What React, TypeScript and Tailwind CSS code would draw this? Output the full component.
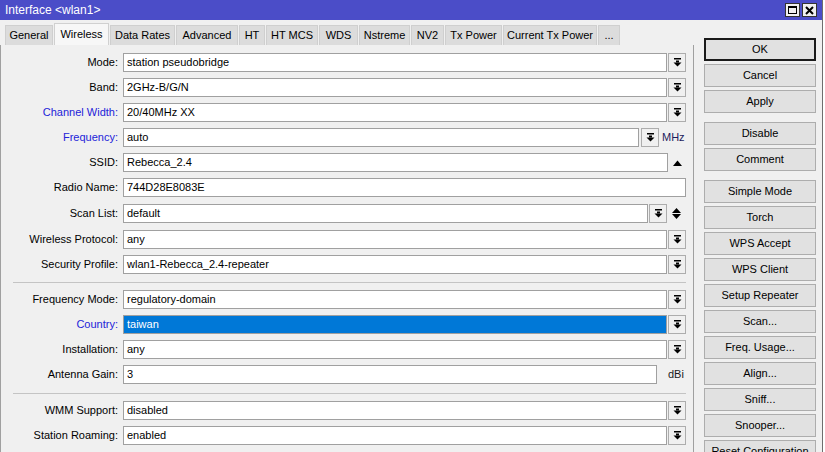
import React from 'react';

const tabs = [
  { label: 'General', w: 'w-[48px]' },
  { label: 'Wireless', w: 'w-[55px]', active: true },
  { label: 'Data Rates', w: 'w-[65px]' },
  { label: 'Advanced', w: 'w-[62px]' },
  { label: 'HT', w: 'w-[26px]' },
  { label: 'HT MCS', w: 'w-[52px]' },
  { label: 'WDS', w: 'w-[39px]' },
  { label: 'Nstreme', w: 'w-[51px]' },
  { label: 'NV2', w: 'w-[33px]' },
  { label: 'Tx Power', w: 'w-[57px]' },
  { label: 'Current Tx Power', w: 'w-[94px]' },
  { label: '...', w: 'w-[22px]' },
];

const DropIcon = () => (
  <svg width="9" height="9" viewBox="0 0 9 9">
    <rect x="1" y="0" width="7" height="1.5" fill="#000" />
    <rect x="3" y="2.5" width="3" height="2" fill="#000" />
    <polygon points="0.5,4.5 8.5,4.5 4.5,8.5" fill="#000" />
  </svg>
);

const DropBtn = () => (
  <div className="w-[18px] h-[19px] shrink-0 border border-[#adadad] bg-[#f0f0f0] flex items-center justify-center">
    <DropIcon />
  </div>
);

const Input: React.FC<{ value: string; selected?: boolean }> = ({ value, selected }) => (
  <div
    className={
      selected
        ? 'flex-1 h-[19px] border border-[#a0a0a0] bg-[#0078d7] text-white pl-[3px] leading-[17px] whitespace-nowrap overflow-hidden'
        : 'flex-1 h-[19px] border border-[#a0a0a0] bg-white pl-[3px] leading-[17px] whitespace-nowrap overflow-hidden'
    }
  >
    {value}
  </div>
);

type Kind = 'drop' | 'plain' | 'up' | 'freq' | 'scan' | 'dbi';

const Row: React.FC<{ label: string; value: string; kind: Kind; blue?: boolean; selected?: boolean; mb?: string }> = ({
  label,
  value,
  kind,
  blue,
  selected,
  mb = 'mb-[6px]',
}) => (
  <div className={'flex items-center h-[19px] shrink-0 ' + mb}>
    <div className={'w-[117px] text-right whitespace-nowrap ' + (blue ? 'text-[#2323d9]' : 'text-black')}>{label}:</div>
    <div className="ml-[5px] w-[563px] flex items-center">
      <Input value={value} selected={selected} />
      {kind === 'drop' && (
        <div className="ml-[1px]">
          <DropBtn />
        </div>
      )}
      {kind === 'up' && (
        <div className="w-[18px] shrink-0 flex justify-center">
          <svg width="9" height="6" viewBox="0 0 9 6">
            <polygon points="0,6 9,6 4.5,0.5" fill="#000" />
          </svg>
        </div>
      )}
      {kind === 'freq' && (
        <>
          <div className="ml-[2px]">
            <DropBtn />
          </div>
          <div className="w-[27px] shrink-0 pl-[3px] text-[#1c1c5c]">MHz</div>
        </>
      )}
      {kind === 'scan' && (
        <>
          <div className="ml-[1px]">
            <DropBtn />
          </div>
          <div className="w-[19px] shrink-0 flex flex-col items-center gap-[1px]">
            <svg width="9" height="5" viewBox="0 0 9 5">
              <polygon points="0,5 9,5 4.5,0" fill="#000" />
            </svg>
            <svg width="9" height="5" viewBox="0 0 9 5">
              <polygon points="0,0 9,0 4.5,5" fill="#000" />
            </svg>
          </div>
        </>
      )}
      {kind === 'dbi' && <div className="w-[29px] shrink-0 pl-[11px] text-[#1a1a1a]">dBi</div>}
    </div>
  </div>
);

const Sep = () => <div className="ml-[12px] w-[673px] h-px shrink-0 bg-[#c4c4c4] mt-[2px] mb-[7px]" />;

const Btn: React.FC<{ label: string; primary?: boolean; extra?: string }> = ({ label, primary, extra = '' }) => (
  <div
    className={
      'w-[112px] h-[23px] shrink-0 flex items-center justify-center bg-[#e1e1e1] whitespace-nowrap overflow-hidden ' +
      (primary ? 'border-2 border-[#1a1a1a] ' : 'border border-[#adadad] ') +
      extra
    }
  >
    {label}
  </div>
);

export default function App() {
  return (
    <div
      className="w-[825px] h-[452px] overflow-hidden bg-white text-[11px] text-black"
      style={{ fontFamily: '"Liberation Sans", Arial, sans-serif' }}
    >
      <div className="w-[823px] h-[452px] bg-[#f0f0f0] border-r border-[#6e6e6e] flex flex-col">
        {/* title bar */}
        <div className="h-[20px] shrink-0 bg-[#4b4dc8] flex items-center pl-[5px] text-white text-[12px]">
          <span>Interface &lt;wlan1&gt;</span>
          <div className="ml-auto mr-[5px] flex gap-[2px]">
            <div className="w-[15px] h-[14px] bg-[#f0f0f0] border border-[#333] flex items-center justify-center">
              <div className="w-[9px] h-[8px] border border-black border-t-2" />
            </div>
            <div className="w-[15px] h-[14px] bg-[#f0f0f0] border border-[#333] flex items-center justify-center">
              <svg width="9" height="9" viewBox="0 0 9 9">
                <path d="M1 1 L8 8 M8 1 L1 8" stroke="#000" strokeWidth="2" />
              </svg>
            </div>
          </div>
        </div>

        <div className="flex flex-1 min-h-0">
          {/* left column */}
          <div className="w-[694px] shrink-0 flex flex-col">
            <div className="h-[25px] shrink-0 pt-[3px] pl-[5px] flex items-end">
              {tabs.map((t) => (
                <div
                  key={t.label}
                  className={
                    t.active
                      ? t.w + ' h-[22px] mr-[1px] bg-[#f7f7f7] border border-b-0 border-[#d0d0d0] flex items-center justify-center whitespace-nowrap'
                      : t.w + ' h-[20px] mr-[1px] bg-[#dcdcdc] border border-b-0 border-[#cfcfcf] flex items-center justify-center whitespace-nowrap'
                  }
                >
                  {t.label}
                </div>
              ))}
            </div>
            <div className="flex-1 flex flex-col border-l border-r border-[#a0a0a0] pt-[8px]">
              <Row label="Mode" value="station pseudobridge" kind="drop" />
              <Row label="Band" value="2GHz-B/G/N" kind="drop" />
              <Row label="Channel Width" value="20/40MHz XX" kind="drop" blue />
              <Row label="Frequency" value="auto" kind="freq" blue />
              <Row label="SSID" value="Rebecca_2.4" kind="up" />
              <Row label="Radio Name" value="744D28E8083E" kind="plain" mb="mb-[7px]" />
              <Row label="Scan List" value="default" kind="scan" mb="mb-[7px]" />
              <Row label="Wireless Protocol" value="any" kind="drop" />
              <Row label="Security Profile" value="wlan1-Rebecca_2.4-repeater" kind="drop" />
              <Sep />
              <Row label="Frequency Mode" value="regulatory-domain" kind="drop" />
              <Row label="Country" value="taiwan" kind="drop" blue selected />
              <Row label="Installation" value="any" kind="drop" />
              <Row label="Antenna Gain" value="3" kind="dbi" mb="mb-[7px]" />
              <Sep />
              <Row label="WMM Support" value="disabled" kind="drop" />
              <Row label="Station Roaming" value="enabled" kind="drop" />
            </div>
          </div>

          {/* right column */}
          <div className="flex-1 pl-[10px] pt-[18px] flex flex-col gap-[3px]">
            <Btn label="OK" primary />
            <Btn label="Cancel" />
            <Btn label="Apply" />
            <Btn label="Disable" extra="mt-[6px]" />
            <Btn label="Comment" />
            <Btn label="Simple Mode" extra="mt-[6px]" />
            <Btn label="Torch" />
            <Btn label="WPS Accept" />
            <Btn label="WPS Client" />
            <Btn label="Setup Repeater" />
            <Btn label="Scan..." />
            <Btn label="Freq. Usage..." />
            <Btn label="Align..." />
            <Btn label="Sniff..." />
            <Btn label="Snooper..." />
            <Btn label="Reset Configuration" />
          </div>
        </div>
      </div>
    </div>
  );
}
